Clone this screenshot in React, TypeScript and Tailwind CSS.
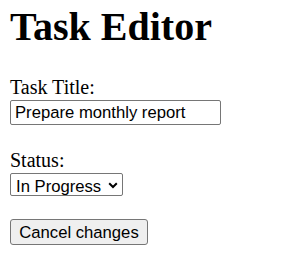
import { useState } from 'react';

export default function App() {
  const [title, setTitle] = useState('Prepare monthly report');
  const [status, setStatus] = useState('In Progress');

  return (
    <div className="min-h-screen bg-white px-[10px] pt-[4px] text-black font-['Liberation_Serif','Times_New_Roman',serif]">
      <h1 className="text-[40px] font-bold leading-[46px]">Task Editor</h1>

      <label htmlFor="title" className="mt-[26px] block text-[20px] leading-[23px]">
        Task Title:
      </label>
      <input
        id="title"
        value={title}
        onChange={(e) => setTitle(e.target.value)}
        className="mt-[1px] block h-[25px] w-[211px] rounded-[2px] border border-[#767676] bg-white pl-[4px] text-[16.67px] font-['Liberation_Sans',Arial,sans-serif] outline-none"
      />

      <label htmlFor="status" className="mt-[24px] block text-[20px] leading-[23px]">
        Status:
      </label>
      <div className="relative mt-[1px] h-[23px] w-[113px]">
        <select
          id="status"
          value={status}
          onChange={(e) => setStatus(e.target.value)}
          className="block h-full w-full appearance-none rounded-[2px] border border-[#767676] bg-white pl-[5px] text-[16.67px] font-['Liberation_Sans',Arial,sans-serif] outline-none"
        >
          <option>To Do</option>
          <option>In Progress</option>
          <option>Done</option>
        </select>
        <svg
          className="pointer-events-none absolute left-[98px] top-[9px]"
          width="10"
          height="7"
          viewBox="0 0 10 7"
          fill="none"
        >
          <path d="M1.2 1.3 L5 5 L8.8 1.3" stroke="#000" strokeWidth="2" />
        </svg>
      </div>

      <button
        type="button"
        className="mt-[23px] block h-[26px] w-[138px] rounded-[3px] border border-[#767676] bg-[#efefef] text-[16.67px] font-['Liberation_Sans',Arial,sans-serif]"
      >
        Cancel changes
      </button>
    </div>
  );
}
